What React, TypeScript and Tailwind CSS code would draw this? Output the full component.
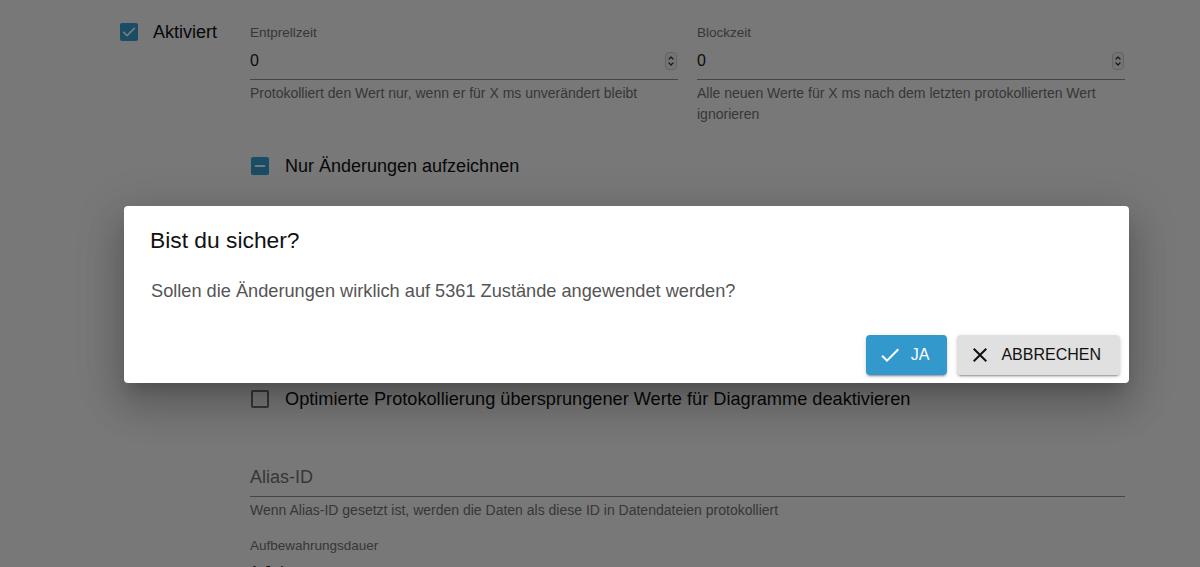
import React from 'react';

// small macOS-like number spinner drawn next to the number fields
const Spinner: React.FC = () => (
  <div className="w-[12px] h-[18px] rounded-[4px] border border-[#d4d4d4] bg-[#f6f6f6] flex flex-col items-center justify-center">
    <svg width="8" height="14" viewBox="0 0 8 14" fill="none" stroke="#333" strokeWidth="1.2" strokeLinecap="round" strokeLinejoin="round">
      <path d="M2 5l2-2 2 2" />
      <path d="M2 9l2 2 2-2" />
    </svg>
  </div>
);

const CheckBox: React.FC<{ state: 'checked' | 'indeterminate' | 'off' }> = ({ state }) => {
  if (state === 'off') {
    return <div className="w-[18px] h-[18px] rounded-[2px] border-2 border-[#757575] bg-white shrink-0" />;
  }
  return (
    <div className="w-[18px] h-[18px] rounded-[2px] bg-[#3aa2d8] flex items-center justify-center shrink-0">
      {state === 'checked' ? (
        <svg width="16" height="16" viewBox="0 0 24 24" fill="none" stroke="#fff" strokeWidth="2.6" strokeLinecap="round" strokeLinejoin="round">
          <path d="M4 12.5l5 5L20 6.5" />
        </svg>
      ) : (
        <div className="w-[10px] h-[2px] bg-white" />
      )}
    </div>
  );
};

const NumberField: React.FC<{ label: string; helper: string }> = ({ label, helper }) => (
  <div className="flex flex-col">
    <div className="text-[13.5px] leading-[16px] text-[#757575] mt-[2px]">{label}</div>
    <div className="flex items-center justify-between border-b border-[#949494] pt-[10px] pb-[9px] pr-[1px]">
      <span className="text-[16px] leading-[19px] text-[#212121]">0</span>
      <Spinner />
    </div>
    <div className="text-[14px] leading-[21px] text-[#757575] mt-[3px]">{helper}</div>
  </div>
);

const App: React.FC = () => {
  return (
    <div className="relative h-[567px] overflow-hidden bg-white font-['Liberation_Sans',Arial,sans-serif]">
      <div className="flex pl-[120px] pt-[23px]">
        {/* left column */}
        <div className="w-[130px] shrink-0">
          <div className="flex items-center gap-[15px] h-[18px]">
            <CheckBox state="checked" />
            <span className="text-[18px] leading-[22px] text-[#111]">Aktiviert</span>
          </div>
        </div>

        {/* main settings */}
        <div className="w-[875px] flex flex-col">
          <div className="grid grid-cols-2 gap-[19px]">
            <NumberField label="Entprellzeit" helper="Protokolliert den Wert nur, wenn er für X ms unverändert bleibt" />
            <NumberField label="Blockzeit" helper="Alle neuen Werte für X ms nach dem letzten protokollierten Wert ignorieren" />
          </div>

          <div className="flex items-center gap-[16px] mt-[30px] pl-[1px] h-[22px]">
            <CheckBox state="indeterminate" />
            <span className="text-[18px] leading-[22px] text-[#111]">Nur Änderungen aufzeichnen</span>
          </div>

          <div className="h-[211px]" />

          <div className="flex items-center gap-[16px] pl-[1px] h-[22px]">
            <CheckBox state="off" />
            <span className="text-[18.2px] leading-[22px] text-[#111]">Optimierte Protokollierung übersprungener Werte für Diagramme deaktivieren</span>
          </div>

          <div className="mt-[56px] border-b border-[#949494] pb-[6px]">
            <span className="text-[18px] leading-[22px] text-[#757575]">Alias-ID</span>
          </div>
          <div className="text-[14px] leading-[21px] text-[#757575] mt-[3px]">
            Wenn Alias-ID gesetzt ist, werden die Daten als diese ID in Datendateien protokolliert
          </div>
          <div className="text-[13.5px] leading-[21px] text-[#757575] mt-[14px]">Aufbewahrungsdauer</div>
          <div className="text-[16px] leading-[19px] text-[#212121] mt-[7px]">1 Jahr</div>
        </div>
      </div>

      {/* modal overlay */}
      <div className="absolute inset-0 bg-[rgba(0,0,0,0.53)]">
        <div className="ml-[124px] mt-[206px] w-[1005px] h-[177px] bg-white rounded-[4px] flex flex-col shadow-[0_11px_15px_-7px_rgba(0,0,0,0.2),0_24px_38px_3px_rgba(0,0,0,0.14),0_9px_46px_8px_rgba(0,0,0,0.12)]">
          <div className="px-[26px] pt-[18px] text-[22.8px] leading-[32px] text-[#111]">Bist du sicher?</div>
          <div className="px-[27px] mt-[23px] text-[18.2px] leading-[24px] text-[#555]">
            Sollen die Änderungen wirklich auf 5361 Zustände angewendet werden?
          </div>
          <div className="mt-auto flex justify-end gap-[10px] pr-[9px] pb-[8px]">
            <button className="h-[40px] flex items-center gap-[9px] pl-[12px] pr-[18px] rounded-[4px] bg-[#3399cc] text-white text-[16px] uppercase shadow-[0_3px_1px_-2px_rgba(0,0,0,0.2),0_2px_2px_0_rgba(0,0,0,0.14),0_1px_5px_0_rgba(0,0,0,0.12)]">
              <svg width="24" height="24" viewBox="0 0 24 24" fill="currentColor">
                <path d="M9 16.17L4.83 12l-1.42 1.41L9 19 21 7l-1.41-1.41z" />
              </svg>
              Ja
            </button>
            <button className="h-[40px] flex items-center gap-[9px] pl-[11px] pr-[19px] rounded-[4px] bg-[#e0e0e0] text-[#111] text-[16px] uppercase shadow-[0_3px_1px_-2px_rgba(0,0,0,0.2),0_2px_2px_0_rgba(0,0,0,0.14),0_1px_5px_0_rgba(0,0,0,0.12)]">
              <svg width="24" height="24" viewBox="0 0 24 24" fill="currentColor">
                <path d="M19 6.41L17.59 5 12 10.59 6.41 5 5 6.41 10.59 12 5 17.59 6.41 19 12 13.41 17.59 19 19 17.59 13.41 12z" />
              </svg>
              Abbrechen
            </button>
          </div>
        </div>
      </div>
    </div>
  );
};

export default App;
